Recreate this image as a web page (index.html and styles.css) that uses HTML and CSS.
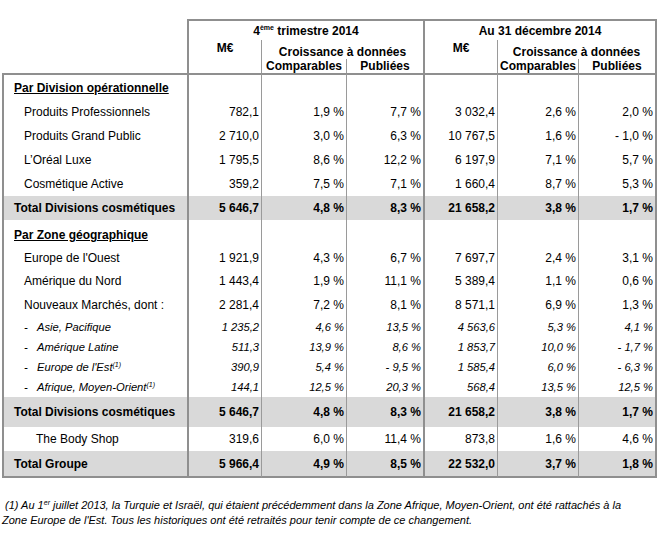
FILE: index.html
```html
<!DOCTYPE html>
<html lang="fr">
<head>
<meta charset="utf-8">
<title>Chiffre d'affaires 2014</title>
<link rel="stylesheet" href="styles.css">
</head>
<body>
<div class="page">
<table class="sales">
  <colgroup>
    <col class="w-label"><col class="w-m1"><col class="w-c1"><col class="w-p1"><col class="w-m2"><col class="w-c2"><col class="w-p2">
  </colgroup>
  <thead>
    <tr class="h1">
      <th class="blank" rowspan="3"></th>
      <th class="grp g1" colspan="3">4<sup>ème</sup> trimestre 2014</th>
      <th class="grp g2" colspan="3">Au 31 décembre 2014</th>
    </tr>
    <tr class="h2">
      <th class="me me1" rowspan="2">M€</th>
      <th class="cro thin" colspan="2">Croissance à données</th>
      <th class="me me2" rowspan="2">M€</th>
      <th class="cro thin lastc" colspan="2">Croissance à données</th>
    </tr>
    <tr class="h3">
      <th class="sub thin">Comparables</th>
      <th class="sub thin">Publiées</th>
      <th class="sub thin">Comparables</th>
      <th class="sub thin lastc">Publiées</th>
    </tr>
  </thead>
  <tbody>
    <tr class="r-sec first">
      <td class="lbl sec">Par Division opérationnelle</td>
      <td class="n m1"></td><td class="n"></td><td class="n"></td><td class="n m2"></td><td class="n"></td><td class="n lastc"></td>
    </tr>
    <tr class="r24">
      <td class="lbl item">Produits Professionnels</td>
      <td class="n m1">782,1</td><td class="n">1,9 %</td><td class="n">7,7 %</td><td class="n m2">3 032,4</td><td class="n">2,6 %</td><td class="n lastc">2,0 %</td>
    </tr>
    <tr class="r24">
      <td class="lbl item">Produits Grand Public</td>
      <td class="n m1">2 710,0</td><td class="n">3,0 %</td><td class="n">6,3 %</td><td class="n m2">10 767,5</td><td class="n">1,6 %</td><td class="n lastc">- 1,0 %</td>
    </tr>
    <tr class="r24">
      <td class="lbl item">L’Oréal Luxe</td>
      <td class="n m1">1 795,5</td><td class="n">8,6 %</td><td class="n">12,2 %</td><td class="n m2">6 197,9</td><td class="n">7,1 %</td><td class="n lastc">5,7 %</td>
    </tr>
    <tr class="r24">
      <td class="lbl item">Cosmétique Active</td>
      <td class="n m1">359,2</td><td class="n">7,5 %</td><td class="n">7,1 %</td><td class="n m2">1 660,4</td><td class="n">8,7 %</td><td class="n lastc">5,3 %</td>
    </tr>
    <tr class="r24 total">
      <td class="lbl tot">Total Divisions cosmétiques</td>
      <td class="n m1">5 646,7</td><td class="n">4,8 %</td><td class="n">8,3 %</td><td class="n m2">21 658,2</td><td class="n">3,8 %</td><td class="n lastc">1,7 %</td>
    </tr>
    <tr class="r-sec2">
      <td class="lbl sec">Par Zone géographique</td>
      <td class="n m1"></td><td class="n"></td><td class="n"></td><td class="n m2"></td><td class="n"></td><td class="n lastc"></td>
    </tr>
    <tr class="r23">
      <td class="lbl item">Europe de l'Ouest</td>
      <td class="n m1">1 921,9</td><td class="n">4,3 %</td><td class="n">6,7 %</td><td class="n m2">7 697,7</td><td class="n">2,4 %</td><td class="n lastc">3,1 %</td>
    </tr>
    <tr class="r24">
      <td class="lbl item">Amérique du Nord</td>
      <td class="n m1">1 443,4</td><td class="n">1,9 %</td><td class="n">11,1 %</td><td class="n m2">5 389,4</td><td class="n">1,1 %</td><td class="n lastc">0,6 %</td>
    </tr>
    <tr class="r24">
      <td class="lbl item">Nouveaux Marchés, dont :</td>
      <td class="n m1">2 281,4</td><td class="n">7,2 %</td><td class="n">8,1 %</td><td class="n m2">8 571,1</td><td class="n">6,9 %</td><td class="n lastc">1,3 %</td>
    </tr>
    <tr class="r20 it">
      <td class="lbl item"><span class="dash">-</span>Asie, Pacifique</td>
      <td class="n m1">1 235,2</td><td class="n">4,6 %</td><td class="n">13,5 %</td><td class="n m2">4 563,6</td><td class="n">5,3 %</td><td class="n lastc">4,1 %</td>
    </tr>
    <tr class="r20 it">
      <td class="lbl item"><span class="dash">-</span>Amérique Latine</td>
      <td class="n m1">511,3</td><td class="n">13,9 %</td><td class="n">8,6 %</td><td class="n m2">1 853,7</td><td class="n">10,0 %</td><td class="n lastc">- 1,7 %</td>
    </tr>
    <tr class="r20 it">
      <td class="lbl item"><span class="dash">-</span>Europe de l'Est<sup>(1)</sup></td>
      <td class="n m1">390,9</td><td class="n">5,4 %</td><td class="n">- 9,5 %</td><td class="n m2">1 585,4</td><td class="n">6,0 %</td><td class="n lastc">- 6,3 %</td>
    </tr>
    <tr class="r20 it">
      <td class="lbl item"><span class="dash">-</span>Afrique, Moyen-Orient<sup>(1)</sup></td>
      <td class="n m1">144,1</td><td class="n">12,5 %</td><td class="n">20,3 %</td><td class="n m2">568,4</td><td class="n">13,5 %</td><td class="n lastc">12,5 %</td>
    </tr>
    <tr class="r30 total">
      <td class="lbl tot">Total Divisions cosmétiques</td>
      <td class="n m1">5 646,7</td><td class="n">4,8 %</td><td class="n">8,3 %</td><td class="n m2">21 658,2</td><td class="n">3,8 %</td><td class="n lastc">1,7 %</td>
    </tr>
    <tr class="r24">
      <td class="lbl sub2">The Body Shop</td>
      <td class="n m1">319,6</td><td class="n">6,0 %</td><td class="n">11,4 %</td><td class="n m2">873,8</td><td class="n">1,6 %</td><td class="n lastc">4,6 %</td>
    </tr>
    <tr class="r-last total last">
      <td class="lbl tot">Total Groupe</td>
      <td class="n m1">5 966,4</td><td class="n">4,9 %</td><td class="n">8,5 %</td><td class="n m2">22 532,0</td><td class="n">3,7 %</td><td class="n lastc">1,8 %</td>
    </tr>
  </tbody>
</table>
<p class="note">(1) Au 1<sup>er</sup> juillet 2013, la Turquie et Israël, qui étaient précédemment dans la Zone Afrique, Moyen-Orient, ont été rattachés à la<br>Zone Europe de l'Est. Tous les historiques ont été retraités pour tenir compte de ce changement.</p>
</div>
</body>
</html>
```

FILE: styles.css
```css
html, body {
  margin: 0;
  padding: 0;
  background: #ffffff;
}
body {
  font-family: "Liberation Sans", Arial, sans-serif;
  color: #000000;
}
.page {
  padding: 19px 0 0 2px;
}
.sales {
  border-collapse: separate;
  border-spacing: 0;
  table-layout: fixed;
  width: 655px;
  font-size: 12px;
}
.w-label { width: 185px; }
.w-m1 { width: 74px; }
.w-c1 { width: 85px; }
.w-p1 { width: 77px; }
.w-m2 { width: 74px; }
.w-c2 { width: 81px; }
.w-p2 { width: 79px; }

.sales th, .sales td {
  padding: 0;
  line-height: 14px;
  white-space: nowrap;
}
.sales th {
  font-weight: bold;
  text-align: center;
}

/* header */
.h1 { height: 21px; }
.h2 { height: 19px; }
.h3 { height: 14px; }
.sales th.grp {
  border-top: 2px solid #8f8f8f;
  vertical-align: middle;
}
.sales th.g1 { border-left: 2px solid #8f8f8f; }
.sales th.g2 { border-left: 2px solid #8f8f8f; border-right: 2px solid #8f8f8f; }
.grp sup {
  font-size: 7px;
  line-height: 0;
  vertical-align: 5px;
}
.sales th.me {
  vertical-align: top;
  padding-top: 1px;
  border-left: 2px solid #8f8f8f;
}
.sales th.cro { vertical-align: bottom; }
.sales th.sub { vertical-align: bottom; }
.sales th.thin { border-left: 1px solid #9a9a9a; }
.sales th.lastc, .sales td.lastc { border-right: 2px solid #8f8f8f; }

/* body */
.sales td.lbl {
  text-align: left;
  border-left: 2px solid #8f8f8f;
}
.sales td.n {
  text-align: right;
  padding-right: 2px;
  border-left: 1px solid #9a9a9a;
}
.sales td.m1, .sales td.m2 { border-left: 2px solid #8f8f8f; }
.sales tbody td { vertical-align: middle; }

.sales tr.first td { border-top: 2px solid #8f8f8f; }
.sales tr.last td { border-bottom: 2px solid #8f8f8f; }

.r-sec { height: 27px; }
.r-sec2 { height: 26px; }
.sales tr.r-sec2 td { padding-top: 4px; }
.r24 { height: 24px; }
.r23 { height: 23px; }
.r20 { height: 20px; }
.r30 { height: 30px; }
.r-last { height: 27px; }

.sales td.sec {
  padding-left: 10px;
  font-weight: bold;
  text-decoration: underline;
}
.sales td.item { padding-left: 20px; }
.sales td.sub2 { padding-left: 32px; }
.sales td.tot {
  padding-left: 10px;
  font-weight: bold;
}
.sales tr.total td {
  background: #d9d9d9;
  font-weight: bold;
}

.sales tr.it td {
  font-size: 11.2px;
  font-style: italic;
}
.dash {
  display: inline-block;
  width: 13px;
}
.it sup {
  font-size: 7px;
  line-height: 0;
  vertical-align: 4px;
}

/* footnote */
.note {
  margin: 20px 0 0 0;
  font-size: 11px;
  line-height: 15px;
  font-style: italic;
  text-indent: 3px;
  white-space: nowrap;
}
.note sup {
  font-size: 7px;
  line-height: 0;
  vertical-align: 4px;
}
```
